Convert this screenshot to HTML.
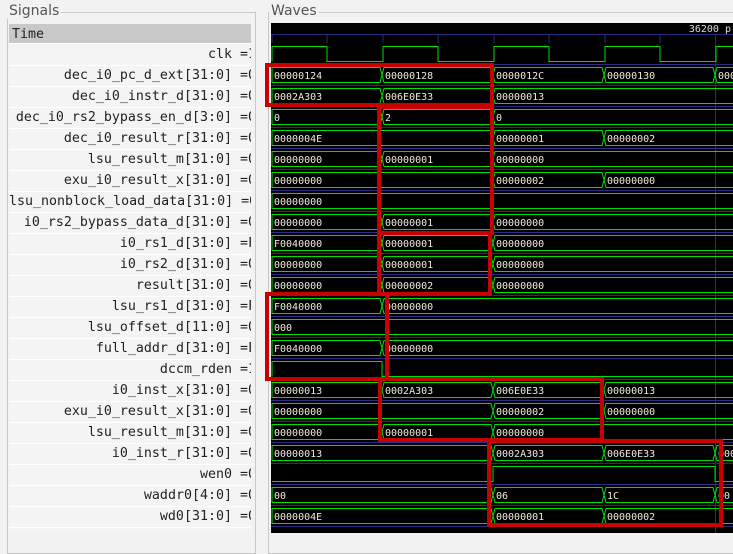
<!DOCTYPE html>
<html><head><meta charset="utf-8"><style>
body{margin:0;width:733px;height:533px;overflow:hidden;background:#f2f2f2;font-family:"DejaVu Sans Mono","Liberation Mono",monospace;position:relative}
.lbl{position:absolute;font-family:"DejaVu Sans","Liberation Sans",sans-serif;font-size:14px;color:#555;background:#f2f2f2;padding:0 2px}
#sig{position:absolute;left:7px;top:12px;width:247px;height:540px;border:1px solid #c8c8c8}
#list{position:absolute;left:9px;top:24px;width:242px;height:509px;overflow:hidden;background:#f4f4f4}
.r{width:247px;height:20px;border-bottom:1px solid #fff;font-size:13.3px;color:#222;text-align:right;line-height:20px;white-space:nowrap;overflow:hidden}
.t{background:#c8c8c8;text-align:left;padding-left:3px;width:239px;height:19px;line-height:22px;margin-bottom:1px}
#wf{position:absolute;left:268px;top:12px;width:470px;height:540px;border:1px solid #c8c8c8}
</style></head><body>
<div id="sig"></div>
<div class="lbl" style="left:7px;top:3px">Signals</div>
<div id="list">
<div class="r t">Time</div>
<div class="r">clk&nbsp;=1</div>
<div class="r">dec_i0_pc_d_ext[31:0]&nbsp;=0</div>
<div class="r">dec_i0_instr_d[31:0]&nbsp;=0</div>
<div class="r">dec_i0_rs2_bypass_en_d[3:0]&nbsp;=0</div>
<div class="r">dec_i0_result_r[31:0]&nbsp;=0</div>
<div class="r">lsu_result_m[31:0]&nbsp;=0</div>
<div class="r">exu_i0_result_x[31:0]&nbsp;=0</div>
<div class="r">lsu_nonblock_load_data[31:0]&nbsp;=0</div>
<div class="r">i0_rs2_bypass_data_d[31:0]&nbsp;=0</div>
<div class="r">i0_rs1_d[31:0]&nbsp;=F</div>
<div class="r">i0_rs2_d[31:0]&nbsp;=0</div>
<div class="r">result[31:0]&nbsp;=0</div>
<div class="r">lsu_rs1_d[31:0]&nbsp;=F</div>
<div class="r">lsu_offset_d[11:0]&nbsp;=0</div>
<div class="r">full_addr_d[31:0]&nbsp;=F</div>
<div class="r">dccm_rden&nbsp;=1</div>
<div class="r">i0_inst_x[31:0]&nbsp;=0</div>
<div class="r">exu_i0_result_x[31:0]&nbsp;=0</div>
<div class="r">lsu_result_m[31:0]&nbsp;=0</div>
<div class="r">i0_inst_r[31:0]&nbsp;=0</div>
<div class="r">wen0&nbsp;=0</div>
<div class="r">waddr0[4:0]&nbsp;=0</div>
<div class="r">wd0[31:0]&nbsp;=0</div>
<div class="r"></div>
</div>
<div id="wf"></div>
<div class="lbl" style="left:269px;top:3px">Waves</div>
<svg style="position:absolute;left:0;top:0" width="733" height="533" viewBox="0 0 733 533">
<rect x="271" y="23" width="462" height="510" fill="#000"/>
<text x="731" y="32" text-anchor="end" font-size="10" fill="#ddd" font-family="DejaVu Sans Mono,monospace">36200 p</text>
<g stroke="#2a2a80" stroke-width="1">
<line x1="271" y1="34.5" x2="733" y2="34.5"/>
<line x1="272" y1="34" x2="272" y2="43"/><line x1="327" y1="34" x2="327" y2="43"/><line x1="383" y1="34" x2="383" y2="43"/><line x1="438" y1="34" x2="438" y2="43"/><line x1="494" y1="34" x2="494" y2="43"/><line x1="549" y1="34" x2="549" y2="43"/><line x1="605" y1="34" x2="605" y2="43"/><line x1="660" y1="34" x2="660" y2="43"/>
<line x1="271" y1="64.5" x2="733" y2="64.5"/><line x1="271" y1="85.5" x2="733" y2="85.5"/><line x1="271" y1="106.5" x2="733" y2="106.5"/><line x1="271" y1="127.5" x2="733" y2="127.5"/><line x1="271" y1="148.5" x2="733" y2="148.5"/><line x1="271" y1="169.5" x2="733" y2="169.5"/><line x1="271" y1="190.5" x2="733" y2="190.5"/><line x1="271" y1="211.5" x2="733" y2="211.5"/><line x1="271" y1="232.5" x2="733" y2="232.5"/><line x1="271" y1="253.5" x2="733" y2="253.5"/><line x1="271" y1="274.5" x2="733" y2="274.5"/><line x1="271" y1="295.5" x2="733" y2="295.5"/><line x1="271" y1="316.5" x2="733" y2="316.5"/><line x1="271" y1="337.5" x2="733" y2="337.5"/><line x1="271" y1="358.5" x2="733" y2="358.5"/><line x1="271" y1="379.5" x2="733" y2="379.5"/><line x1="271" y1="400.5" x2="733" y2="400.5"/><line x1="271" y1="421.5" x2="733" y2="421.5"/><line x1="271" y1="442.5" x2="733" y2="442.5"/><line x1="271" y1="463.5" x2="733" y2="463.5"/><line x1="271" y1="484.5" x2="733" y2="484.5"/><line x1="271" y1="505.5" x2="733" y2="505.5"/><line x1="271" y1="526.5" x2="733" y2="526.5"/>
<line x1="715.5" y1="34" x2="715.5" y2="533"/>
</g>
<g fill="none" stroke="#00e000" stroke-width="1">
<polyline points="272,61.5 272,46.5 327,46.5 327,61.5 383,61.5 383,46.5 438,46.5 438,61.5 494,61.5 494,46.5 549,46.5 549,61.5 605,61.5 605,46.5 660,46.5 660,61.5 716,61.5 716,46.5 740,46.5"/>
<polygon points="272,67.5 380,67.5 382,75 380,82.5 272,82.5"/>
<polygon points="382,75 384,67.5 491,67.5 493,75 491,82.5 384,82.5"/>
<polygon points="493,75 495,67.5 602,67.5 604,75 602,82.5 495,82.5"/>
<polygon points="604,75 606,67.5 713,67.5 715,75 713,82.5 606,82.5"/>
<polyline points="740,67.5 717,67.5 715,75 717,82.5 740,82.5"/>
<polygon points="272,88.5 380,88.5 382,96 380,103.5 272,103.5"/>
<polygon points="382,96 384,88.5 491,88.5 493,96 491,103.5 384,103.5"/>
<polyline points="740,88.5 495,88.5 493,96 495,103.5 740,103.5"/>
<polygon points="272,109.5 380,109.5 382,117 380,124.5 272,124.5"/>
<polygon points="382,117 384,109.5 491,109.5 493,117 491,124.5 384,124.5"/>
<polyline points="740,109.5 495,109.5 493,117 495,124.5 740,124.5"/>
<polygon points="272,130.5 491,130.5 493,138 491,145.5 272,145.5"/>
<polygon points="493,138 495,130.5 602,130.5 604,138 602,145.5 495,145.5"/>
<polyline points="740,130.5 606,130.5 604,138 606,145.5 740,145.5"/>
<polygon points="272,151.5 380,151.5 382,159 380,166.5 272,166.5"/>
<polygon points="382,159 384,151.5 491,151.5 493,159 491,166.5 384,166.5"/>
<polyline points="740,151.5 495,151.5 493,159 495,166.5 740,166.5"/>
<polygon points="272,172.5 491,172.5 493,180 491,187.5 272,187.5"/>
<polygon points="493,180 495,172.5 602,172.5 604,180 602,187.5 495,187.5"/>
<polyline points="740,172.5 606,172.5 604,180 606,187.5 740,187.5"/>
<polyline points="740,193.5 272,193.5 272,208.5 740,208.5"/>
<polygon points="272,214.5 380,214.5 382,222 380,229.5 272,229.5"/>
<polygon points="382,222 384,214.5 491,214.5 493,222 491,229.5 384,229.5"/>
<polyline points="740,214.5 495,214.5 493,222 495,229.5 740,229.5"/>
<polygon points="272,235.5 380,235.5 382,243 380,250.5 272,250.5"/>
<polygon points="382,243 384,235.5 491,235.5 493,243 491,250.5 384,250.5"/>
<polyline points="740,235.5 495,235.5 493,243 495,250.5 740,250.5"/>
<polygon points="272,256.5 380,256.5 382,264 380,271.5 272,271.5"/>
<polygon points="382,264 384,256.5 491,256.5 493,264 491,271.5 384,271.5"/>
<polyline points="740,256.5 495,256.5 493,264 495,271.5 740,271.5"/>
<polygon points="272,277.5 380,277.5 382,285 380,292.5 272,292.5"/>
<polygon points="382,285 384,277.5 491,277.5 493,285 491,292.5 384,292.5"/>
<polyline points="740,277.5 495,277.5 493,285 495,292.5 740,292.5"/>
<polygon points="272,298.5 380,298.5 382,306 380,313.5 272,313.5"/>
<polyline points="740,298.5 384,298.5 382,306 384,313.5 740,313.5"/>
<polyline points="740,319.5 272,319.5 272,334.5 740,334.5"/>
<polygon points="272,340.5 380,340.5 382,348 380,355.5 272,355.5"/>
<polyline points="740,340.5 384,340.5 382,348 384,355.5 740,355.5"/>
<polyline points="272,376.5 272,361.5 382,361.5 382,376.5 740,376.5"/>
<polygon points="272,382.5 380,382.5 382,390 380,397.5 272,397.5"/>
<polygon points="382,390 384,382.5 491,382.5 493,390 491,397.5 384,397.5"/>
<polygon points="493,390 495,382.5 602,382.5 604,390 602,397.5 495,397.5"/>
<polyline points="740,382.5 606,382.5 604,390 606,397.5 740,397.5"/>
<polygon points="272,403.5 491,403.5 493,411 491,418.5 272,418.5"/>
<polygon points="493,411 495,403.5 602,403.5 604,411 602,418.5 495,418.5"/>
<polyline points="740,403.5 606,403.5 604,411 606,418.5 740,418.5"/>
<polygon points="272,424.5 380,424.5 382,432 380,439.5 272,439.5"/>
<polygon points="382,432 384,424.5 491,424.5 493,432 491,439.5 384,439.5"/>
<polyline points="740,424.5 495,424.5 493,432 495,439.5 740,439.5"/>
<polygon points="272,445.5 491,445.5 493,453 491,460.5 272,460.5"/>
<polygon points="493,453 495,445.5 602,445.5 604,453 602,460.5 495,460.5"/>
<polygon points="604,453 606,445.5 713,445.5 715,453 713,460.5 606,460.5"/>
<polyline points="740,445.5 717,445.5 715,453 717,460.5 740,460.5"/>
<polyline points="272,481.5 493,481.5 493,466.5 715,466.5 715,481.5 740,481.5"/>
<polygon points="272,487.5 491,487.5 493,495 491,502.5 272,502.5"/>
<polygon points="493,495 495,487.5 602,487.5 604,495 602,502.5 495,502.5"/>
<polygon points="604,495 606,487.5 713,487.5 715,495 713,502.5 606,502.5"/>
<polyline points="740,487.5 717,487.5 715,495 717,502.5 740,502.5"/>
<polygon points="272,508.5 491,508.5 493,516 491,523.5 272,523.5"/>
<polygon points="493,516 495,508.5 602,508.5 604,516 602,523.5 495,523.5"/>
<polyline points="740,508.5 606,508.5 604,516 606,523.5 740,523.5"/>
</g>
<g font-family="DejaVu Sans Mono,monospace" font-size="10" fill="#f0eadc">
<text x="274" y="79">00000124</text><text x="385" y="79">00000128</text><text x="496" y="79">0000012C</text><text x="607" y="79">00000130</text><text x="718" y="79">000</text>
<text x="274" y="100">0002A303</text><text x="385" y="100">006E0E33</text><text x="496" y="100">00000013</text>
<text x="274" y="121">0</text><text x="385" y="121">2</text><text x="496" y="121">0</text>
<text x="274" y="142">0000004E</text><text x="496" y="142">00000001</text><text x="607" y="142">00000002</text>
<text x="274" y="163">00000000</text><text x="385" y="163">00000001</text><text x="496" y="163">00000000</text>
<text x="274" y="184">00000000</text><text x="496" y="184">00000002</text><text x="607" y="184">00000000</text>
<text x="274" y="205">00000000</text>
<text x="274" y="226">00000000</text><text x="385" y="226">00000001</text><text x="496" y="226">00000000</text>
<text x="274" y="247">F0040000</text><text x="385" y="247">00000001</text><text x="496" y="247">00000000</text>
<text x="274" y="268">00000000</text><text x="385" y="268">00000001</text><text x="496" y="268">00000000</text>
<text x="274" y="289">00000000</text><text x="385" y="289">00000002</text><text x="496" y="289">00000000</text>
<text x="274" y="310">F0040000</text><text x="385" y="310">00000000</text>
<text x="274" y="331">000</text>
<text x="274" y="352">F0040000</text><text x="385" y="352">00000000</text>
<text x="274" y="394">00000013</text><text x="385" y="394">0002A303</text><text x="496" y="394">006E0E33</text><text x="607" y="394">00000013</text>
<text x="274" y="415">00000000</text><text x="496" y="415">00000002</text><text x="607" y="415">00000000</text>
<text x="274" y="436">00000000</text><text x="385" y="436">00000001</text><text x="496" y="436">00000000</text>
<text x="274" y="457">00000013</text><text x="496" y="457">0002A303</text><text x="607" y="457">006E0E33</text><text x="718" y="457">000</text>
<text x="274" y="499">00</text><text x="496" y="499">06</text><text x="607" y="499">1C</text><text x="718" y="499">00</text>
<text x="274" y="520">0000004E</text><text x="496" y="520">00000001</text><text x="607" y="520">00000002</text>
</g>
<g fill="none" stroke="#c80000" stroke-width="4">
<rect x="267" y="65" width="225" height="40"/>
<rect x="379" y="107" width="113" height="126"/>
<rect x="379" y="233" width="111" height="61"/>
<rect x="267" y="294" width="120" height="85"/>
<rect x="380" y="379" width="222" height="61"/>
<rect x="489" y="441" width="232" height="84"/>
</g>
</svg>
</body></html>
